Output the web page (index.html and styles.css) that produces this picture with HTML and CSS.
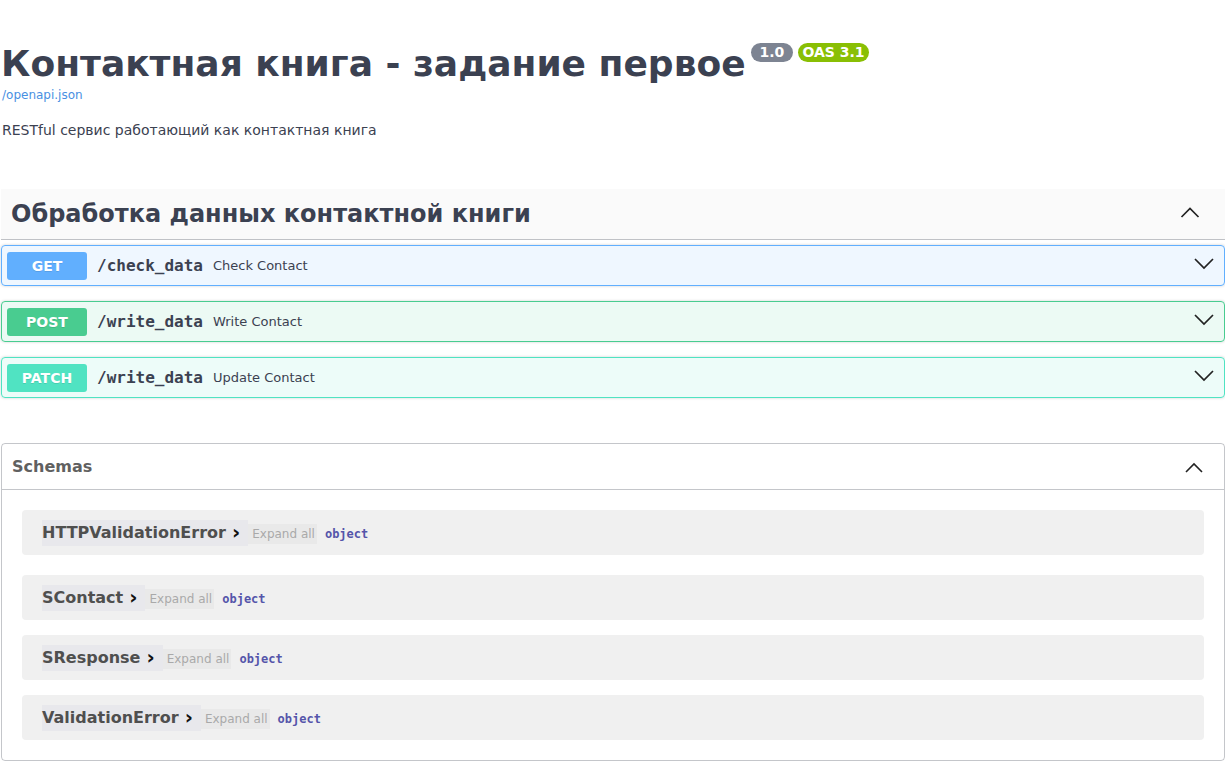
FILE: index.html
```html
<!DOCTYPE html>
<html lang="ru">
<head>
<meta charset="utf-8">
<title>Контактная книга - задание первое</title>
<link rel="stylesheet" href="styles.css">
</head>
<body>
<div class="wrapper">
  <div class="info">
    <div class="hgroup">
      <h2 class="title">Контактная книга - задание первое<span class="badges"><span class="badge badge-ver">1.0</span><span class="badge badge-oas">OAS 3.1</span></span></h2>
      <a class="spec-link" href="#">/openapi.json</a>
    </div>
    <p class="description">RESTful сервис работающий как контактная книга</p>
  </div>

  <section class="tag-section">
    <h3 class="tag-header">
      <span>Обработка данных контактной книги</span>
      <svg class="arrow" width="20" height="20" viewBox="0 0 20 20"><polyline points="1.5,14 10,5.5 18.5,14" fill="none" stroke="#222" stroke-width="1.7"/></svg>
    </h3>
    <div class="opblock opblock-get">
      <span class="method">GET</span>
      <span class="path">/check_data</span>
      <span class="summary">Check Contact</span>
      <svg class="chev" width="20" height="20" viewBox="0 0 20 20"><polyline points="1,5 10,14 19,5" fill="none" stroke="#222" stroke-width="1.7"/></svg>
    </div>
    <div class="opblock opblock-post">
      <span class="method">POST</span>
      <span class="path">/write_data</span>
      <span class="summary">Write Contact</span>
      <svg class="chev" width="20" height="20" viewBox="0 0 20 20"><polyline points="1,5 10,14 19,5" fill="none" stroke="#222" stroke-width="1.7"/></svg>
    </div>
    <div class="opblock opblock-patch">
      <span class="method">PATCH</span>
      <span class="path">/write_data</span>
      <span class="summary">Update Contact</span>
      <svg class="chev" width="20" height="20" viewBox="0 0 20 20"><polyline points="1,5 10,14 19,5" fill="none" stroke="#222" stroke-width="1.7"/></svg>
    </div>
  </section>

  <section class="models">
    <h4 class="models-header">
      <span>Schemas</span>
      <svg class="arrow-sm" width="20" height="20" viewBox="0 0 20 20"><polyline points="2,14 10,6 18,14" fill="none" stroke="#222" stroke-width="1.6"/></svg>
    </h4>
    <div class="models-body">
      <div class="model-container">
        <span class="model-title">HTTPValidationError<span class="model-chev">›</span></span><span class="expand">Expand all</span><span class="type">object</span>
      </div>
      <div class="model-container">
        <span class="model-title">SContact<span class="model-chev">›</span></span><span class="expand">Expand all</span><span class="type">object</span>
      </div>
      <div class="model-container">
        <span class="model-title">SResponse<span class="model-chev">›</span></span><span class="expand">Expand all</span><span class="type">object</span>
      </div>
      <div class="model-container">
        <span class="model-title">ValidationError<span class="model-chev">›</span></span><span class="expand">Expand all</span><span class="type">object</span>
      </div>
    </div>
  </section>
</div>
</body>
</html>
```

FILE: styles.css
```css
* { box-sizing: border-box; }
html, body { margin: 0; padding: 0; background: #fff; }
body {
  font-family: "DejaVu Sans", sans-serif;
  color: #3b4151;
}
.wrapper {
  padding: 0 0 0 1px;
  width: 1225px;
}
.info { margin: 0 0 50px 0; padding-top: 43px; }
.hgroup { margin: 0 0 20px 0; }
.title {
  margin: 0;
  font-size: 36px;
  font-weight: bold;
  line-height: 42px;
  color: #3b4151;
  display: flex;
  align-items: flex-start;
}
.badges { display: inline-flex; gap: 5px; margin-left: 5px; margin-top: 0; }
.badge {
  display: inline-block;
  font-size: 14px;
  font-weight: bold;
  line-height: 19px;
  height: 19px;
  padding: 0 4px;
  border-radius: 57px;
  color: #fff;
}
.badge-ver { background: #7d8492; padding: 0 9px; }
.badge-oas { background: #89bf04; }
.spec-link {
  display: block;
  font-size: 12px;
  line-height: 14px;
  color: #4990e2;
  text-decoration: none;
  margin-top: 3px;
  margin-left: 1px;
}
.description {
  margin: 0 0 0 1px;
  font-size: 14px;
  line-height: 17px;
  color: #3b4151;
}

.tag-section { margin-bottom: 0; }
.tag-header {
  margin: 0 0 5px 0;
  height: 51px;
  padding: 0 20px 0 10px;
  display: flex;
  align-items: center;
  justify-content: space-between;
  font-size: 24px;
  font-weight: bold;
  color: #3b4151;
  background: #fafafa;
  border-bottom: 1px solid rgba(59,65,81,.3);
}
.tag-header .arrow { margin-right: 5px; margin-top: -2px; }

.opblock {
  display: flex;
  align-items: center;
  height: 41px;
  padding: 0 5px;
  margin: 0 0 15px 0;
  border: 1px solid;
  border-radius: 4px;
  box-shadow: 0 0 3px rgba(0,0,0,.19);
}
.method {
  min-width: 80px;
  height: 28px;
  line-height: 28px;
  border-radius: 3px;
  text-align: center;
  font-size: 14px;
  font-weight: bold;
  color: #fff;
  text-shadow: 0 1px 0 rgba(0,0,0,.1);
}
.path {
  padding: 0 10px;
  font-family: "DejaVu Sans Mono", monospace;
  font-size: 16px;
  font-weight: bold;
  color: #3b4151;
}
.summary {
  flex: 1;
  font-size: 13px;
  color: #3b4151;
}
.chev { margin-right: 5px; margin-top: -3px; }
.opblock-get { background: rgba(97,175,254,.1); border-color: #61affe; }
.opblock-get .method { background: #61affe; }
.opblock-post { background: rgba(73,204,144,.1); border-color: #49cc90; }
.opblock-post .method { background: #49cc90; }
.opblock-patch { background: rgba(80,227,194,.1); border-color: #50e3c2; }
.opblock-patch .method { background: #50e3c2; }

.models {
  margin: 45px 0 0 0;
  border: 1px solid rgba(59,65,81,.3);
  border-radius: 4px;
  width: 1224px;
}
.models-header {
  margin: 0;
  height: 46px;
  padding: 0 20px 0 10px;
  display: flex;
  align-items: center;
  justify-content: space-between;
  font-size: 16px;
  font-weight: bold;
  color: #606060;
  border-bottom: 1px solid rgba(59,65,81,.3);
}
.models-header .arrow-sm { margin-right: 0; margin-top: 2px; }
.models-body { padding: 20px 0 5px; }
.model-container {
  display: flex;
  align-items: center;
  margin: 0 20px 15px 20px;
  height: 45px;
  padding: 0 20px;
  background: #f0f0f0;
  border-radius: 4px;
}
.model-container:first-child { margin-bottom: 20px; }
.model-title {
  display: inline-flex;
  align-items: center;
  height: 26px;
  font-size: 16px;
  font-weight: bold;
  color: #4f4f4f;
  background: #e8e8ec;
  padding-right: 8px;
}
.model-chev {
  font-size: 20px;
  color: #111;
  margin-left: 6px;
  margin-top: -2px;
  font-weight: bold;
  display: inline-block;
}
.expand {
  display: inline-block;
  height: 20px;
  line-height: 20px;
  font-size: 12px;
  color: #a9a9a9;
  background: #e9e9e9;
  padding: 0 2px 0 4px;
  margin-top: 2px;
}
.type {
  margin-left: 8px;
  font-family: "DejaVu Sans Mono", monospace;
  font-weight: bold;
  font-size: 12px;
  color: #55a;
  margin-top: 2px;
}
```
